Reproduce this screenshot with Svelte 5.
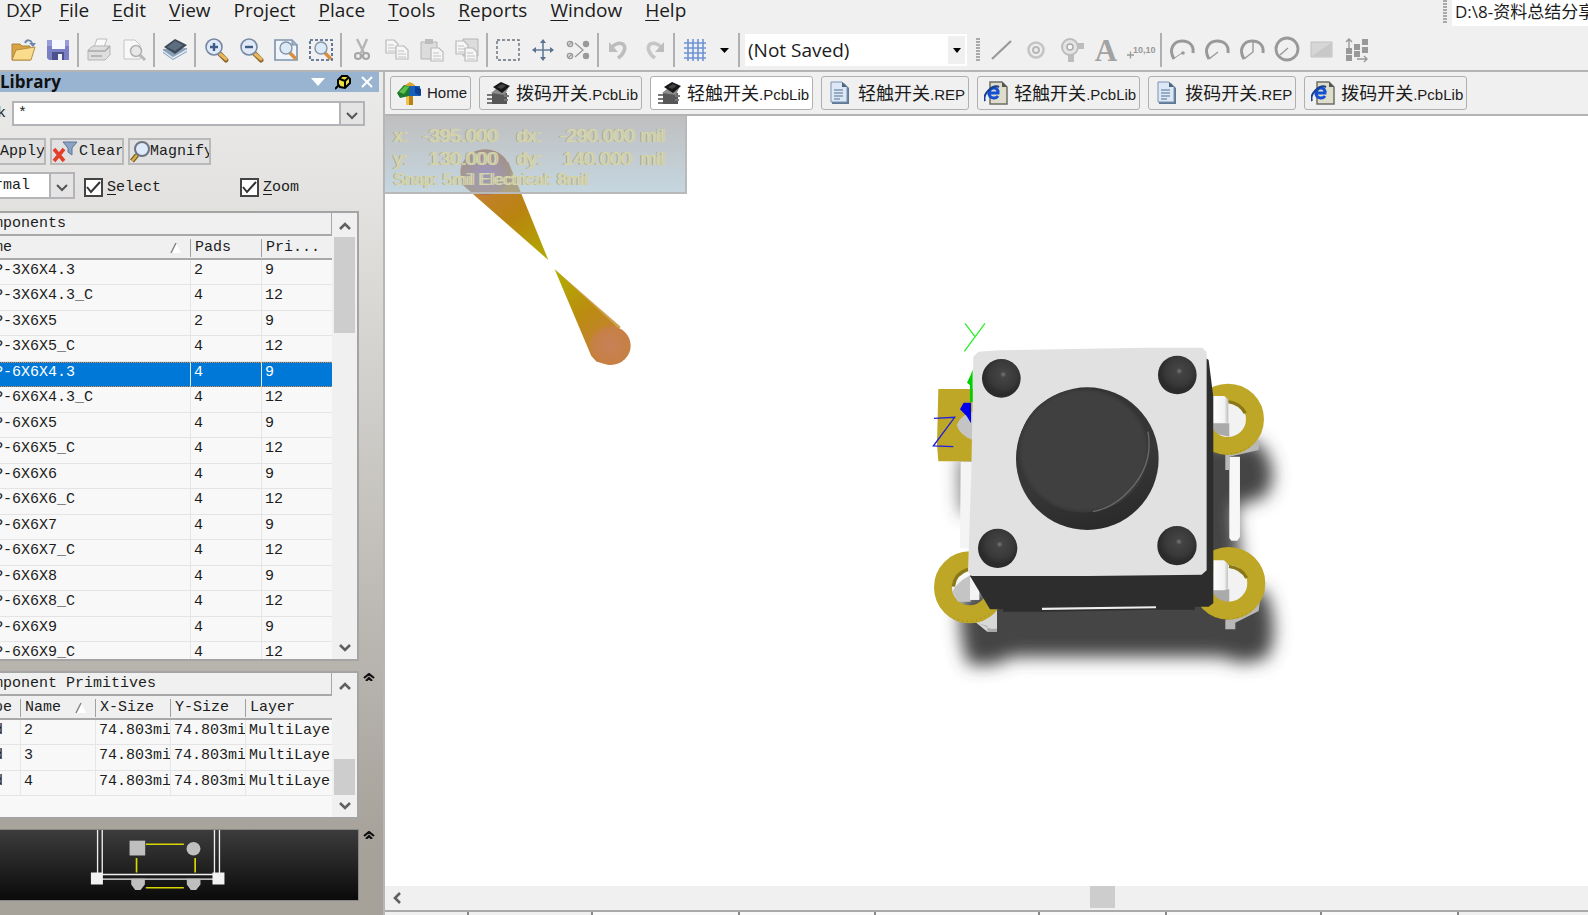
<script>
  const menus = [
    ['D', 'X', 'P'], ['', 'F', 'ile'], ['', 'E', 'dit'], ['', 'V', 'iew'], ['Proje', 'c', 't'],
    ['', 'P', 'lace'], ['', 'T', 'ools'], ['', 'R', 'eports'], ['', 'W', 'indow'], ['', 'H', 'elp']
  ];

  const lens = (sign) => `<path d="M16 16l6 6" stroke="#8d6a2c" stroke-width="5" stroke-linecap="round"/><path d="M16 16l6 5" stroke="#e8b65c" stroke-width="3" stroke-linecap="round"/><circle cx="10" cy="9" r="8" fill="#dfe9f8" stroke="#7788a0" stroke-width="1.6"/><path d="${sign}" stroke="#3f5c86" stroke-width="2.4"/>`;
  const smallLens = '<path d="M16 15l5 5" stroke="#d98e3e" stroke-width="3.4" stroke-linecap="round"/><circle cx="12" cy="10" r="6" fill="#dce9f6" stroke="#8494a8" stroke-width="1.4"/>';
  const sheet = (x, y) => `<path d="M${x} ${y}h8l4 4v9h-12z" fill="#f6f6f6" stroke="#b9b9b9" stroke-width="1.2"/><path d="M${x + 2} ${y + 5}h6m-6 3h8m-8 3h8" stroke="#c2c2c2"/>`;
  const arc = '<path d="M4 21C-2 11 4 3 12 3s12 5 11 12" stroke="#999" stroke-width="3" fill="none"/>';

  const icons = {
    open: '<path d="M1 6h8l2 2h8v14H1z" fill="#d9a441" stroke="#a9823e"/><path d="M5 12l19-3-4 13H1z" fill="#fbdc8c" stroke="#b58d45"/><path d="M14 5c2-4 6-3 7 0" stroke="#6c86ad" stroke-width="2" fill="none"/><path d="M18 5h7l-3 4z" fill="#6c86ad"/>',
    save: '<path d="M1 2h22v20H3l-2-2z" fill="#7b80c6"/><path d="M1 2h22v6H1z" fill="#989bd8"/><path d="M6 2h13v9H6z" fill="#f6f8ff"/><path d="M6 14h12v8H6z" fill="#4c518c"/><path d="M12 16h4v6h-4z" fill="#eef0fb"/>',
    print: '<path d="M7 9l3-8h10l-3 8z" fill="#fafafa" stroke="#bbb"/><path d="M1 12l5-4h17v9l-5 5H1z" fill="#dedede" stroke="#b5b5b5"/><path d="M1 13h17l5-5M4 18h11" stroke="#a9a9a9" fill="none" stroke-width="1.4"/>',
    preview: '<path d="M2 2h11l5 5v14H2z" fill="#f8f8f8" stroke="#c4c4c4"/><circle cx="14" cy="13" r="5.500" fill="#e8e8e8" stroke="#b0b0b0" stroke-width="1.5"/><path d="M18 17l5 5" stroke="#b8b8b8" stroke-width="3"/>',
    chip: '<path d="M0 11v4l10 7 14-8v-4z" fill="#8aa0b8"/><path d="M0 13l10 7 14-8" stroke="#dfe8f1" fill="none" stroke-width="1.5"/><path d="M1 9l11-8 12 6-12 9z" fill="#3e4a58"/><path d="M4 9l8-6 8 4-8 6z" fill="#5d6d80"/>',
    zoomIn: lens('M6 9h8M10 5v8'),
    zoomOut: lens('M6 9h8'),
    zoomPage: '<path d="M1 2h17l5 5v15H1z" fill="#eff5fb" stroke="#7d92ab" stroke-width="1.6"/><path d="M18 2v5h5" fill="#9db3ca" stroke="#7d92ab"/>' + smallLens,
    zoomArea: '<path d="M1 2h22v20H1z" fill="none" stroke="#44597c" stroke-width="1.6" stroke-dasharray="3 2"/>' + smallLens,
    cut: '<path d="M7 1l7 14M17 1l-6 14" stroke="#b5b5b5" stroke-width="2.4"/><circle cx="8" cy="18" r="3" fill="none" stroke="#a6a6a6" stroke-width="2.2"/><circle cx="16" cy="18" r="3" fill="none" stroke="#a6a6a6" stroke-width="2.200"/>',
    copy: sheet(1, 2) + sheet(11, 8),
    paste: '<path d="M1 4h16v17H1z" fill="#dcdcdc" stroke="#b5b5b5"/><path d="M5 1h8v5H5z" fill="#bdbdbd"/>' + sheet(11, 10),
    pasteSpecial: '<path d="M8 1h15v17H8z" fill="#dcdcdc" stroke="#b5b5b5"/>' + sheet(1, 3) + sheet(10, 10),
    select: '<path d="M1 2h22v20H1z" fill="none" stroke="#666f79" stroke-width="1.4" stroke-dasharray="3 2"/>',
    move: '<path d="M12 3v18M3 12h18" stroke="#667d99" stroke-width="1.6"/><path d="M12 1l3 4H9zM12 23l3-4H9zM1 12l4-3v6zM23 12l-4-3v6z" fill="#5a718f"/>',
    deselect: '<path d="M9 5l8 7-8 7" stroke="#999" fill="none" stroke-width="1.3"/><g fill="#999"><circle cx="20" cy="6" r="3.200"/><circle cx="20" cy="18" r="3.200"/></g><g fill="none" stroke="#999" stroke-width="1.400"><circle cx="4" cy="6" r="2.600"/><circle cx="4" cy="18" r="2.600"/><path d="M2 8l4-4M2 20l4-4"/></g>',
    undo: '<path d="M5 9c8-7 15-3 12 4-1 3-3 5-6 7" stroke="#bdbdbd" stroke-width="3.600" fill="none"/><path d="M2 4v10h9z" fill="#bdbdbd"/>',
    redo: '<path d="M19 9c-8-7-15-3-12 4 1 3 3 5 6 7" stroke="#c6c6c6" stroke-width="3.600" fill="none"/><path d="M22 4v10h-9z" fill="#bdbdbd"/>',
    grid: '<path d="M5 1v22M10 1v22M15 1v22M20 1v22M1 5h22M1 10h22M1 15h22M1 20h22" stroke="#6f93d6" stroke-width="1.600"/>',
    caret: '<path d="M8 10h9l-4.500 5z" fill="#000"/>',
    line: '<path d="M3 21L22 3" stroke="#999" stroke-width="2.200"/>',
    via: '<circle cx="12" cy="12" r="7.500" fill="#eee" stroke="#c4c4c4" stroke-width="2.600"/><circle cx="12" cy="12" r="3" fill="none" stroke="#b8b8b8" stroke-width="2"/>',
    pad: '<path d="M12 8h13M12 12v12" stroke="#bdbdbd" stroke-width="6"/><circle cx="11" cy="9" r="8" fill="#e4e4e4" stroke="#bcbcbc" stroke-width="2"/><circle cx="11" cy="9" r="3" fill="#f6f6f6" stroke="#aaa" stroke-width="1.500"/>',
    text: '<text x="12" y="23" text-anchor="middle" font-family="Liberation Serif, serif" font-weight="700" font-size="31" fill="#a2a2a2">A</text>',
    coord: '<path d="M-2 17h7M1.500 13.500v7" stroke="#999" stroke-width="1.300"/><text x="4" y="15" font-family="Liberation Sans, sans-serif" font-size="9" font-weight="700" fill="#999">10,10</text>',
    arcCentre: arc + '<path d="M3 21l9-6" stroke="#999"/><circle cx="13" cy="15" r="1.800" fill="#999"/>',
    arcEdge: arc + '<path d="M4 21l9-7" stroke="#999" stroke-width="1.400"/>',
    arcAny: arc + '<path d="M4 21l9-7V3" stroke="#999" fill="none" stroke-width="1.400"/>',
    circle: '<circle cx="12" cy="11" r="11" fill="none" stroke="#999" stroke-width="2.800"/><path d="M5 17l8-7" stroke="#999" stroke-width="1.400"/>',
    fill: '<path d="M1 4h21v15H1z" fill="#d6d6d6" stroke="#c0c0c0"/><path d="M2 18L21 5v13z" fill="#c8c8c8"/>',
    array: '<path d="M4 10V2M1 4l3-3 3 3M12 21h9M19 18l3 3-3 3" stroke="#999" stroke-width="1.400" fill="none"/><path d="M1 10h6v6H1zM1 17h6v6H1zM9 6h6v6H9zM9 13h6v6H9zM17 1h6v6h-6zM17 9h6v6h-6z" fill="#999"/>'
  };

  const leftTools = [
    ['open', 'save'], ['print', 'preview'], ['chip'], ['zoomIn', 'zoomOut', 'zoomPage', 'zoomArea'],
    ['cut', 'copy', 'paste', 'pasteSpecial'], ['select', 'move', 'deselect'], ['undo', 'redo'], ['grid', 'caret']
  ];
  const rightTools = [
    ['line', 'via', 'pad', 'text', 'coord'],
    ['arcCentre', 'arcEdge', 'arcAny', 'circle', 'fill', 'array']
  ];

  const tabIcons = {
    home: '<path d="M9 8h7v16H9z" fill="#b98212"/><path d="M9 8h3v16H9z" fill="#edc355"/><path d="M8 4l5-3 5 3v3H8z" fill="#d9a52c"/><path d="M12 5h11v10H12z" fill="#1560bd"/><path d="M18 5l6 3v7l-6-3z" fill="#0c3f91"/><path d="M0 12L7 4l6 2-1 9-9 2z" fill="#1c7a2a"/><path d="M2 11l6-6 4 1-5 7z" fill="#5cc04c"/>',
    lib: '<path d="M6 12h15v11H6z" fill="#575757"/><path d="M1 14h5M1 18h5M1 22h5M18 15h5M18 19h4" stroke="#777" stroke-width="2"/><path d="M5 12l5-4 13-3-4 9z" fill="#8b8b8b"/><path d="M7 6l8-5 9 4-8 7z" fill="#161616"/><path d="M11 6l5-3 4 2-5 3z" fill="#444"/>',
    rep: '<path d="M4 2h12l5 5v16H4z" fill="#5f7896"/><path d="M3 1h11l5 5v15H3z" fill="#dce8f5" stroke="#7b93b0"/><path d="M14 1v5h5z" fill="#4e6582"/><path d="M6 9h9M6 12h9M6 15h9M6 18h6" stroke="#7f97b4" stroke-width="1.300"/>',
    web: '<path d="M6 1h12l5 5v17H6z" fill="#dedccb" stroke="#6d6d66" stroke-width="1.500"/><path d="M18 1v5h5z" fill="#555"/><path d="M14 12H5c1-7 10-6 9 0H5c0 6 7 6 9 3" fill="none" stroke="#1450d2" stroke-width="3"/><path d="M1 20C-2 13 9 3 15 6" fill="none" stroke="#1a3f8c" stroke-width="2"/>'
  };
  const tabs = [
    { icon: 'home', cn: '', en: 'Home' },
    { icon: 'lib', cn: '拨码开关', en: '.PcbLib' },
    { icon: 'lib', cn: '轻触开关', en: '.PcbLib', active: true },
    { icon: 'rep', cn: '轻触开关', en: '.REP' },
    { icon: 'web', cn: '轻触开关', en: '.PcbLib' },
    { icon: 'rep', cn: '拨码开关', en: '.REP' },
    { icon: 'web', cn: '拨码开关', en: '.PcbLib' }
  ];

  const components = ['3X6X4.3', '3X6X5', '6X6X4.3', '6X6X5', '6X6X6', '6X6X7', '6X6X8', '6X6X9'].flatMap((size) => [
    { name: `P-${size}`, pads: size[0] === '3' ? 2 : 4, prims: 9 },
    { name: `P-${size}_C`, pads: 4, prims: 12 }
  ]);
  let selected = $state('P-6X6X4.3');
  let mask = $state('*');
  const primitives = [2, 3, 4];
  const layerTabs = [147, 136, 164, 127, 155, 137];
</script>

{#snippet tool(name)}
  <button class="tool" class:narrow={name === 'caret'} aria-label={name}>
    <svg viewBox="0 0 24 24" width="24" height="24" fill="none">{@html icons[name]}</svg>
  </button>
{/snippet}

{#snippet chevron(d)}
  <svg viewBox="0 0 12 12" width="12" height="12" fill="none"><path {d} stroke="#606060" stroke-width="2.6" /></svg>
{/snippet}

{#snippet scrollbar(kind)}
  <div class="vscroll {kind}">
    <button aria-label="Scroll up">{@render chevron('M1 9l5-5 5 5')}</button>
    <div class="track"><div class="thumb"></div></div>
    <button aria-label="Scroll down">{@render chevron('M1 3l5 5 5-5')}</button>
  </div>
{/snippet}

{#snippet fold()}
  <button class="fold" aria-label="Collapse section">
    <svg viewBox="0 0 12 8" width="12" height="8" fill="none"><path d="M1 5l5-4 5 4M3 8l3-3 3 3" stroke="#111" stroke-width="2.200" /></svg>
  </button>
{/snippet}

<div class="app">
  <header class="menubar">
    <nav>
      {#each menus as [a, key, b]}<button>{a}<u>{key}</u>{b}</button>{/each}
    </nav>
    <div class="address">
      <span class="grip"></span>
      <input aria-label="Path" value="D:\8-资料总结分享" />
    </div>
  </header>

  <div class="toolbar">
    {#each leftTools as group}
      <div class="group">{#each group as name}{@render tool(name)}{/each}</div>
    {/each}
    <span class="sep"></span>
    <div class="saved">
      <select aria-label="Saved filter"><option>(Not Saved)</option></select>
      <span class="drop"><svg viewBox="0 0 10 6" width="8" height="5"><path d="M0 0h10L5 6z" /></svg></span>
    </div>
    <span class="grip"></span>
    {#each rightTools as group}
      <div class="group">{#each group as name}{@render tool(name)}{/each}</div>
    {/each}
  </div>

  <div class="workspace">
    <aside>
      <div class="title">
        <h2>Library</h2>
        <button aria-label="Panel menu"><svg viewBox="0 0 14 8" width="14" height="8"><path d="M0 0h14L7 8z" fill="#fff" /></svg></button>
        <button aria-label="Pin panel">
          <svg viewBox="0 0 16 16" width="16" height="16"><path d="M0 15l5-5" stroke="#000" stroke-width="2" /><path d="M3 6l4-4h5l3 3v4l-5 5-5-1-2-3z" fill="#e9e03c" stroke="#000" stroke-width="2" /><path d="M5 5l5 2v6M10 7l3-3" stroke="#000" stroke-width="2" fill="none" /></svg>
        </button>
        <button aria-label="Close panel"><svg viewBox="0 0 12 12" width="12" height="12"><path d="M1 1l10 10M11 1L1 11" stroke="#fff" stroke-width="2" /></svg></button>
      </div>

      <div class="mask">
        <label for="mask">k</label>
        <input id="mask" bind:value={mask} />
        <button class="down" aria-label="Mask history"><svg viewBox="0 0 12 8" width="12" height="8" fill="none"><path d="M1 1l5 5 5-5" stroke="#555" stroke-width="2" /></svg></button>
      </div>

      <div class="actions">
        <button class="apply">Apply</button>
        <button class="clear">
          <svg viewBox="0 0 26 22" width="26" height="22"><path d="M11 1h14l-5 6v7l-4-3V7z" fill="#8aa3c4" stroke="#5e7696" /><path d="M2 8l10 12M12 8L2 20" stroke="#e2402b" stroke-width="3.600" /></svg>Clear
        </button>
        <button class="magnify">
          <svg viewBox="0 0 20 22" width="20" height="22"><path d="M2 20l5-6" stroke="#775c1d" stroke-width="5" /><path d="M2 20l5-6" stroke="#d9b04a" stroke-width="2.500" /><circle cx="12" cy="8" r="7" fill="#dceafb" stroke="#6c7480" stroke-width="2" /></svg>Magnify
        </button>
      </div>

      <div class="options">
        <div class="mode">
          <select aria-label="Highlight mode"><option>rmal</option></select>
          <span class="down"><svg viewBox="0 0 12 8" width="12" height="8" fill="none"><path d="M1 1l5 5 5-5" stroke="#555" stroke-width="2" /></svg></span>
        </div>
        <label class="opt-select"><input type="checkbox" checked /><span><u>S</u>elect</span></label>
        <label><input type="checkbox" checked /><span><u>Z</u>oom</span></label>
      </div>

      <section class="list grow">
        <div class="box">
          <div class="body">
            <h3>mponents</h3>
            <table class="components">
              <colgroup><col /><col class="c71" /><col class="c71" /></colgroup>
              <thead>
                <tr><th><span class="sorted">me<svg viewBox="0 0 12 12" width="12" height="12"><path d="M1 11L6 1l5 10z" fill="#fff" /><path d="M1 11L6 1" stroke="#888" stroke-width="1.500" /></svg></span></th><th>Pads</th><th>Pri...</th></tr>
              </thead>
              <tbody>
                {#each components as c}
                  <tr class:selected={c.name === selected} onclick={() => (selected = c.name)}>
                    <td>{c.name}</td><td>{c.pads}</td><td>{c.prims}</td>
                  </tr>
                {/each}
              </tbody>
            </table>
          </div>
          {@render scrollbar('top')}
        </div>
      </section>

      <section class="list prims">
        <div class="box">
          <div class="body">
            <h3>mponent Primitives</h3>
            <table class="primitives">
              <colgroup><col class="c26" /><col class="c75" /><col class="c75" /><col class="c75" /><col /></colgroup>
              <thead>
                <tr><th>pe</th><th><span class="sorted">Name<svg viewBox="0 0 12 12" width="12" height="12"><path d="M1 11L6 1l5 10z" fill="#fff" /><path d="M1 11L6 1" stroke="#888" stroke-width="1.500" /></svg></span></th><th>X-Size</th><th>Y-Size</th><th>Layer</th></tr>
              </thead>
              <tbody>
                {#each primitives as n}
                  <tr><td>d</td><td>{n}</td><td>74.803mi</td><td>74.803mi</td><td>MultiLaye</td></tr>
                {/each}
              </tbody>
            </table>
          </div>
          {@render scrollbar('bottom')}
        </div>
        {@render fold()}
      </section>

      <section class="list preview">
        <svg class="footprint" viewBox="0 505 1075 217" preserveAspectRatio="none">
          <g stroke="#f0f0f0" stroke-width="4" fill="none"><path d="M293 505v140M307 505v138h337v-138M659 505v152H307" /></g>
          <path d="M273 637h36v37h-36zM638 637h36v37h-36z" fill="#f2f2f2" />
          <g stroke="#d8d800" stroke-width="5"><path d="M438 549h114M438 684h114M410 592v45M586 592v45" /></g>
          <g fill="#bfbfbf"><path d="M389 538h47v46h-47z" /><circle cx="581" cy="563" r="21" /><path d="M394 656h41v18l-13 17h-16l-12-17zM561 656h41v18l-13 17h-16l-12-17z" /></g>
        </svg>
        {@render fold()}
      </section>
    </aside>

    <main>
      <nav class="tabs">
        {#each tabs as t}
          <button class:active={t.active}>
            <svg viewBox="0 0 24 24" width="24" height="24" fill="none">{@html tabIcons[t.icon]}</svg>
            <span>{#if t.cn}<span class="cn">{t.cn}</span>{/if}{t.en}</span>
          </button>
        {/each}
      </nav>

      <div class="canvas">
        <svg class="scene" viewBox="385 116 1203 770">
          <defs>
            <linearGradient id="coneA" gradientUnits="userSpaceOnUse" x1="300" y1="180" x2="505" y2="450"><stop offset="0" stop-color="#c8803f" /><stop offset=".5" stop-color="#b98310" /><stop offset="1" stop-color="#b0ac00" /></linearGradient>
            <linearGradient id="coneB" gradientUnits="userSpaceOnUse" x1="524" y1="478" x2="700" y2="740"><stop offset="0" stop-color="#b0b000" /><stop offset=".5" stop-color="#bb8c10" /><stop offset="1" stop-color="#c77d45" /></linearGradient>
            <radialGradient id="end"><stop offset="0" stop-color="#c88058" /><stop offset="1" stop-color="#c68042" /></radialGradient>
            <radialGradient id="endFar"><stop offset="0" stop-color="#a070c0" /><stop offset=".6" stop-color="#aa7078" /><stop offset="1" stop-color="#b0704c" /></radialGradient>
            <radialGradient id="stud" cx=".55" cy=".4"><stop offset="0" stop-color="#787878" /><stop offset=".16" stop-color="#444" /><stop offset=".7" stop-color="#393939" /><stop offset="1" stop-color="#2b2b2b" /></radialGradient>
            <linearGradient id="capSide" x1=".3" y1="0" x2=".6" y2="1"><stop offset="0" stop-color="#333" /><stop offset=".6" stop-color="#373737" /><stop offset="1" stop-color="#2a2a2a" /></linearGradient>
            <radialGradient id="capTop"><stop offset="0" stop-color="#404040" /><stop offset=".93" stop-color="#404040" /><stop offset="1" stop-color="#383838" /></radialGradient>
            <linearGradient id="pin"><stop offset="0" stop-color="#fff" /><stop offset=".75" stop-color="#f2f2f2" /><stop offset="1" stop-color="#bbb" /></linearGradient>
            <filter id="soft" x="-20%" y="-20%" width="140%" height="140%"><feGaussianBlur stdDeviation="25" /></filter>
          </defs>
          <g transform="translate(380 110) scale(.3333)">
            <path d="M248 225L505 450 385 155z" fill="url(#coneA)" />
            <ellipse cx="316" cy="187" rx="75" ry="69" fill="url(#endFar)" />
            <path d="M524 478L722 650 705 670 640 620z" fill="#cf9f50" />
            <path d="M524 478L705 645 745 730 690 765 650 755 634 738z" fill="url(#coneB)" />
            <ellipse cx="692" cy="707" rx="60" ry="58" fill="url(#end)" />
          </g>
          <g transform="translate(900 310) scale(.3333)">
            <g fill="#454545" filter="url(#soft)">
              <path d="M185 840h910q50 125 5 205l-70 15-70-20H340l-60 25h-75q-35-90-20-225z" />
              <path d="M880 395h195q75 90 20 165l-90 30 20 180-30 100H880z" />
              <path d="M175 440h80v170h-75z" opacity=".7" />
            </g>
            <path d="M182 455h60v260h-62z" fill="#f4f4f4" />
            <path d="M988 440h32v240l-8 12h-18l-6-8z" fill="#f7f7f7" />
            <path d="M976 430v50h12v-40l88-20 3-30z" fill="#b8b8b8" />
            <path d="M976 930v28h30v-20l70-35 4-30z" fill="#b8b8b8" />
            <path d="M225 935l37 30h29v-70h-30z" fill="#d8d8d8" />
            <path d="M235 940l27 8v18h29v-10h-20z" fill="#aaa" />
            <path d="M940 240h75l30 60-5 60-55 25h-45zM940 735h80l30 60-10 65-50 20h-50z" fill="#f2f2f2" />
            <path d="M940 340h48v40l-48-10zM940 838h48v40l-48-10z" fill="#aaa" />
            <path d="M115 237h110v217H115l-4-50z" fill="#bea626" />
            <path d="M170 345q12-32 50-40v85q-40-12-50-45z" fill="#c4c4c4" />
            <g fill="none">
              <ellipse cx="984" cy="328" rx="81" ry="80" stroke="#bea626" stroke-width="54" />
              <ellipse cx="986" cy="820" rx="83" ry="82" stroke="#bea626" stroke-width="54" />
              <ellipse cx="209" cy="832" rx="80" ry="81" stroke="#bea626" stroke-width="54" />
              <path d="M985 275q35 5 51 35M987 769q38 5 53 35M160 830q4-40 45-52" stroke="#8a7818" stroke-width="10" />
              <path d="M925 424q60 25 125-15M930 918q60 25 125-15M160 925q60 25 115-20" stroke="#7e6f20" stroke-width="2" stroke-dasharray="3 11" />
            </g>
            <path d="M157 845q15-30 55-50v80h-38z" fill="#c4c4c4" />
            <path d="M210 800h28v70h-28z" fill="#f4f4f4" />
            <path d="M938 258h35l12 10v70h-45zM940 751h32l12 10v74l-10 6h-34z" fill="url(#pin)" />
            <path d="M919 145l7 5 14 110v620l-14 10H885v9H768l-340 6H310v-7h-40L210 798z" fill="#2d2d2d" />
            <path d="M426 893l342-4v6l-342 5z" fill="#eee" />
            <path d="M220 140l15-15 60-4 440-8h172l13 13v655l-15 13-340 4H215l-11-12 10-300z" fill="#e1e1e1" />
            <ellipse cx="562" cy="446" rx="214" ry="214" fill="url(#capSide)" />
            <ellipse cx="551" cy="422" rx="196" ry="186" fill="url(#capTop)" />
            <path d="M744 365q20 110-75 195-40 35-90 45" fill="none" stroke="#777" stroke-width="4" opacity=".8" />
            <g fill="url(#stud)"><circle cx="304" cy="205" r="58" /><circle cx="832" cy="195" r="58" /><circle cx="293" cy="715" r="59" /><circle cx="831" cy="707" r="59" /></g>
            <path d="M218 178v98h-8v-50l-9-8 12-25z" fill="#00d000" />
            <path d="M213 278h-22l-11 20 20 20 13 22z" fill="#0000f0" />
            <path d="M195 40l30 40M255 40l-62 84" stroke="#2fef2f" stroke-width="4" />
            <path d="M102 325l62-3-64 86 60 2" fill="none" stroke="#2020e0" stroke-width="4" />
          </g>
        </svg>
        <div class="hud">
          <div class="big"><span>x:</span><span class="num">-395.000</span><span class="delta">dx:</span><span class="num">-290.000</span><span>mil</span></div>
          <div class="big"><span>y:</span><span class="num">130.000</span><span class="delta">dy:</span><span class="num">140.000</span><span>mil</span></div>
          <div class="snap">Snap: 5mil Electrical: 8mil</div>
        </div>
      </div>

      <div class="hscroll">
        <button aria-label="Scroll left">{@render chevron('M9 1L4 6l5 5')}</button>
        <div class="track"><div class="thumb"></div></div>
      </div>
      <div class="layers">
        <span class="first"></span><span class="current"></span>
        {#each layerTabs as w}<span class="layer" style="width: {w}px"></span>{/each}
        <span class="rest"></span>
      </div>
    </main>
  </div>
</div>

<style>
  :global(body) { overflow: hidden; }
  * { box-sizing: border-box; }
  button, input, select { font: inherit; color: inherit; border: 0; padding: 0; margin: 0; background: none; border-radius: 0; outline: 0; }
  svg { display: block; flex: none; }
  .app { display: flex; flex-direction: column; height: 100vh; background: #f0f0f0; color: #1c1c1c; font: 15px/20px "Liberation Mono", monospace; }
  u { text-underline-offset: 3px; }

  .menubar { display: flex; justify-content: space-between; height: 33px; font: 19px/21px "Open Sans", "Noto Sans CJK SC", sans-serif; }
  .menubar nav { display: flex; align-items: flex-start; gap: 23px; padding-left: 6px; }
  .menubar nav button { white-space: nowrap; }
  .menubar nav button:first-child { margin-right: -6px; }
  .address { display: flex; align-items: flex-start; gap: 5px; }
  .address input { width: 136px; height: 26px; padding: 0 0 5px 3px; background: #fff; font-size: 17px; }
  .grip { width: 4px; height: 24px; flex: none; background: repeating-linear-gradient(#aaa 0 2px, #f0f0f0 2px 3px); }

  .toolbar { display: flex; align-items: center; height: 39px; padding: 0 0 3px 5px; border-bottom: 2px solid #b4b4b4; flex: none; }
  .group { display: flex; align-items: center; height: 34px; }
  .group + .group { border-left: 2px solid #b0b0b0; margin-left: 2px; padding-left: 2px; }
  .tool { width: 35px; height: 34px; display: flex; align-items: center; justify-content: center; }
  .tool svg { overflow: visible; }
  .narrow { width: 24px; }
  .sep { width: 2px; height: 34px; margin-left: 2px; background: #b0b0b0; }
  .saved { display: flex; align-items: center; position: relative; width: 222px; height: 32px; margin: 0 9px 0 5px; background: #fff; }
  .saved select { appearance: none; width: 100%; height: 100%; padding-left: 3px; font: 19px/22px "Open Sans", sans-serif; }
  .drop { position: absolute; right: 2px; top: 2px; bottom: 2px; width: 17px; display: flex; align-items: center; justify-content: center; background: #f0f0f0; pointer-events: none; }
  .toolbar > .grip { margin-right: 3px; }

  .workspace { display: grid; grid-template-columns: 385px 1fr; flex: 1; min-height: 0; }
  aside { display: flex; flex-direction: column; min-height: 0; overflow: hidden; border-right: 2px solid #b6b6b6; background: linear-gradient(#ebebea, #e3e2e0 15%, #a6a29a 92%); }
  .title { display: flex; align-items: center; gap: 10px; height: 20px; margin-right: 4px; padding-right: 6px; background: #99b4d1; flex: none; }
  .title h2 { flex: 1; margin: 0; font: 700 17px/22px "Open Sans", sans-serif; color: #111; }

  .mask { display: flex; align-items: center; height: 25px; margin: 9px 18px 0 -3px; flex: none; }
  .mask input { flex: 1; min-width: 0; height: 25px; margin-left: 6px; padding: 0 4px; background: #fff; border: 2px solid #b4b4b8; border-right: 0; }
  .down { display: flex; align-items: center; justify-content: center; width: 26px; height: 25px; border: 2px solid #b4b4b8; background: #e4e4e4; padding-top: 4px; }

  .actions { display: flex; gap: 4px; height: 27px; margin-top: 12px; flex: none; }
  .actions button { display: flex; align-items: center; overflow: hidden; border: 2px solid #b9b9b9; background: #e1e1e1; white-space: nowrap; }
  .actions .apply { width: 46px; border-left: 0; }
  .actions .clear { width: 74px; gap: 1px; }
  .actions .magnify { width: 83px; padding: 0; }

  .options { display: flex; align-items: center; height: 27px; margin-top: 7px; flex: none; }
  .mode { position: relative; width: 75px; height: 27px; margin-right: 9px; }
  .mode select { appearance: none; width: 100%; height: 100%; background: #fff; border: 2px solid #b4b4b8; border-left: 0; text-indent: -6px; }
  .mode .down { position: absolute; right: 0; top: 0; height: 27px; pointer-events: none; }
  .options label { display: flex; align-items: center; gap: 4px; padding-top: 4px; }
  .opt-select { margin-right: 79px; }
  .options label input { appearance: none; width: 19px; height: 19px; border: 2px solid #444; background: #fff url("data:image/svg+xml,%3Csvg xmlns='http://www.w3.org/2000/svg' viewBox='0 0 15 15'%3E%3Cpath d='M1 7l4 5 9-10' fill='none' stroke='%23333' stroke-width='2'/%3E%3C/svg%3E") center no-repeat; }

  .list { display: flex; flex: none; }
  .grow { flex: 1; min-height: 0; margin-top: 12px; }
  .prims { height: 148px; margin-top: 10px; }
  .preview { height: 72px; margin: 10px 0 14px; }
  .box { display: flex; width: 359px; overflow: hidden; border: 2px solid #a4a4a4; border-left: 0; background: #f8f8f8; }
  .body { width: 332px; overflow: hidden; flex: none; }
  .list h3 { margin: 0; height: 23px; font: inherit; line-height: 22px; text-indent: -6px; background: #f0f0f0; border-bottom: 2px solid #a8a8a8; border-right: 1px solid #a8a8a8; }
  table { width: 338px; margin-left: -6px; table-layout: fixed; border-collapse: separate; border-spacing: 0; }
  .c71 { width: 71px; } .c75 { width: 75px; } .c26 { width: 26px; }
  th { height: 24px; padding: 2px 0 0; text-align: left; font-weight: 400; line-height: 20px; background: #f0f0f0; border-bottom: 2px solid #a8a8a8; overflow: hidden; }
  th + th { background: linear-gradient(#a0a0a0, #a0a0a0) 0 3px / 1px 18px no-repeat #f0f0f0; padding-left: 5px; }
  .sorted { display: flex; align-items: center; justify-content: space-between; padding-right: 8px; }
  td { height: 25px; padding: 0 0 3px; line-height: 20px; white-space: nowrap; overflow: hidden; border-bottom: 1px solid #e4e4e4; }
  td + td { padding-left: 3px; border-left: 1px solid #e6e6e6; }
  tr:nth-child(even) td { height: 26px; }
  .selected td { background: #0078d7; color: #fff; border-top: 1px dotted #e58a3c; border-bottom: 1px dotted #e58a3c; }
  .vscroll { display: flex; flex-direction: column; align-items: center; flex: 1; padding: 2px 0 0; background: #f0f0f0; }
  .vscroll button { height: 22px; display: flex; align-items: center; }
  .track { flex: 1; align-self: stretch; }
  .vscroll .thumb { height: 96px; margin: 0 2px; background: #cdcdcd; }
  .bottom .track { display: flex; flex-direction: column; justify-content: flex-end; }
  .vscroll.bottom .thumb { height: 36px; }
  .fold { align-self: flex-start; margin: 2px 0 0 4px; }
  .footprint { width: 359px; height: 72px; border: 1px solid #888; border-left: 0; background: linear-gradient(#3c3c3c, #0a0a0a); }

  main { display: flex; flex-direction: column; min-width: 0; min-height: 0; }
  .tabs { display: flex; gap: 8px; height: 44px; padding: 4px 0 0 5px; border-bottom: 2px solid #b4b4b4; flex: none; }
  .tabs button { display: flex; align-items: center; gap: 6px; height: 34px; padding: 0 3px 0 6px; border: 1px solid #b0b0b0; border-radius: 3px; white-space: nowrap; font: 15px/24px "Liberation Sans", sans-serif; }
  .tabs .active { background: #fff; }
  .cn { font: 18px/24px "Noto Sans CJK SC", sans-serif; }
  .canvas { position: relative; flex: 1; min-height: 0; overflow: hidden; background: #fff; }
  .scene { width: 100%; }
  .hud { position: absolute; left: 0; top: 0; width: 302px; height: 78px; padding: 8px 0 0 8px; border: 2px solid #b9b9b9; border-width: 0 2px 2px 0; background: linear-gradient(rgba(148, 148, 148, .6), rgba(158, 187, 203, .6)); color: #d6d6ac; font-family: "Liberation Sans", sans-serif; text-shadow: 2px 0 #d0d0aa, -1px 0 #a5a5a0; }
  .big { display: grid; grid-template-columns: 29px 84px 53px 81px 1fr; font-size: 19px; line-height: 23px; }
  .num { text-align: right; padding-right: 9px; }
  .delta { padding-left: 10px; }
  .snap { font-size: 17px; line-height: 19px; }
  .hscroll { display: flex; align-items: center; height: 24px; padding-left: 6px; background: #f0f0f0; flex: none; }
  .hscroll .track { align-self: stretch; }
  .hscroll .thumb { width: 25px; height: 22px; margin-left: 58%; background: #cdcdcd; }
  .layers { display: flex; height: 5px; border-top: 2px solid #aaa; flex: none; }
  .layers span { flex: none; }
  .first { width: 84px; border-right: 2px solid #888; }
  .current { width: 122px; }
  .layer { border-left: 2px solid #888; background: #fafafa; }
  .layers .rest { flex: 1; border-left: 2px solid #888; }
</style>
